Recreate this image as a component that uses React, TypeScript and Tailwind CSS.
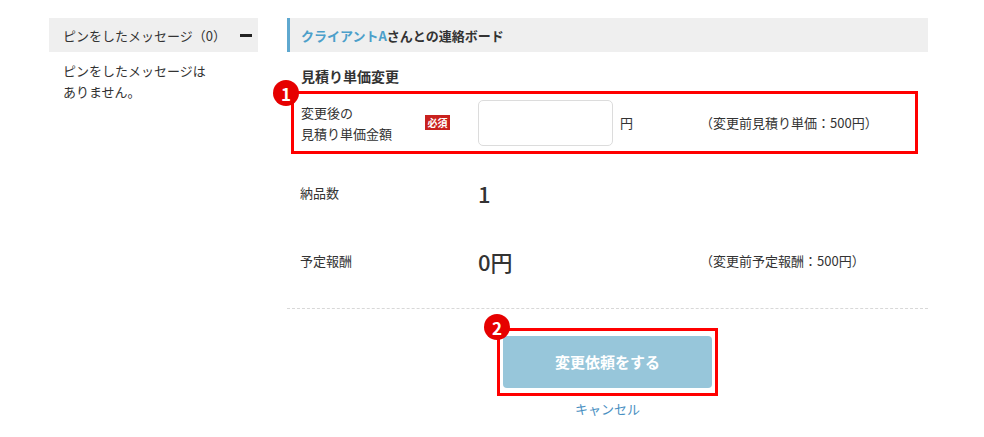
import React from "react";

export default function App() {
  const font = { fontFamily: '"Noto Sans CJK JP", "Noto Sans", sans-serif' };
  return (
    <div style={font} className="w-[984px] h-[437px] bg-white text-[#333] flex pl-[49px] pt-[18px] overflow-hidden">
      {/* Sidebar */}
      <div className="w-[209px] shrink-0">
        <div className="h-[34px] bg-[#efefef] flex items-center justify-between pl-[14px] pr-[6px]">
          <span className="text-[13px] leading-none">ピンをしたメッセージ（0）</span>
          <span className="block w-[12px] h-[3px] bg-[#222]" />
        </div>
        <div className="pl-[14px] pt-[8px] text-[13px] leading-[21px]">
          ピンをしたメッセージは
          <br />
          ありません。
        </div>
      </div>

      {/* Main */}
      <div className="w-[641px] ml-[29px] shrink-0">
        <div className="h-[34px] bg-[#efefef] border-l-[3px] border-[#5fa8cf] flex items-center pl-[11px]">
          <span className="text-[13px] font-bold leading-none">
            <span className="text-[#4c9fca]">クライアントA</span>さんとの連絡ボード
          </span>
        </div>

        <div className="pl-[14px] mt-[14px] text-[14px] font-bold leading-[20px]">見積り単価変更</div>

        {/* Annotated box 1 */}
        <div className="relative ml-[4px] mt-[5px] w-[627px] h-[63px] border-[3px] border-[#ff0000] flex items-center pl-[7px]">
          <div className="absolute left-[-21px] top-[-14px] w-[26px] h-[26px] rounded-full bg-[#e60000] text-white font-bold text-[17px] flex items-center justify-center leading-none">
            1
          </div>
          <div className="w-[124px] text-[13px] leading-[21px]">
            変更後の
            <br />
            見積り単価金額
          </div>
          <div className="w-[25px] h-[15px] bg-[#c9211e] text-white text-[10px] font-bold flex items-center justify-center leading-none">
            必須
          </div>
          <div className="ml-[28px] w-[135px] h-[46px] rounded-[5px] border border-[#dcdcdc] bg-white" />
          <span className="ml-[7px] w-[80px] text-[13px]">円</span>
          <span className="text-[13px]">（変更前見積り単価：500円）</span>
        </div>

        {/* Rows */}
        <div className="pl-[13px] mt-[5px]">
          <div className="h-[68px] flex items-center">
            <span className="w-[178px] text-[13px]">納品数</span>
            <span className="text-[22px] font-medium leading-none">1</span>
          </div>
          <div className="h-[68px] flex items-center">
            <span className="w-[178px] text-[13px]">予定報酬</span>
            <span className="w-[222px] text-[22px] font-medium leading-none">0円</span>
            <span className="text-[13px]">（変更前予定報酬：500円）</span>
          </div>
        </div>

        <div className="mt-[13px] border-t border-dashed border-[#d8d8d8]" />

        <div className="flex flex-col items-center mt-[19px]">
          <div className="relative border-[3px] border-[#ff0000] px-[3px] py-[5px]">
            <div className="absolute left-[-16px] top-[-17px] w-[26px] h-[26px] rounded-full bg-[#e60000] text-white font-bold text-[17px] flex items-center justify-center leading-none">
              2
            </div>
            <div className="w-[209px] h-[52px] rounded-[4px] bg-[#97c6da] text-white font-bold text-[15px] flex items-center justify-center">
              変更依頼をする
            </div>
          </div>
          <span className="mt-[4px] text-[13px] text-[#4a90c2] leading-[18px]">キャンセル</span>
        </div>
      </div>
    </div>
  );
}
